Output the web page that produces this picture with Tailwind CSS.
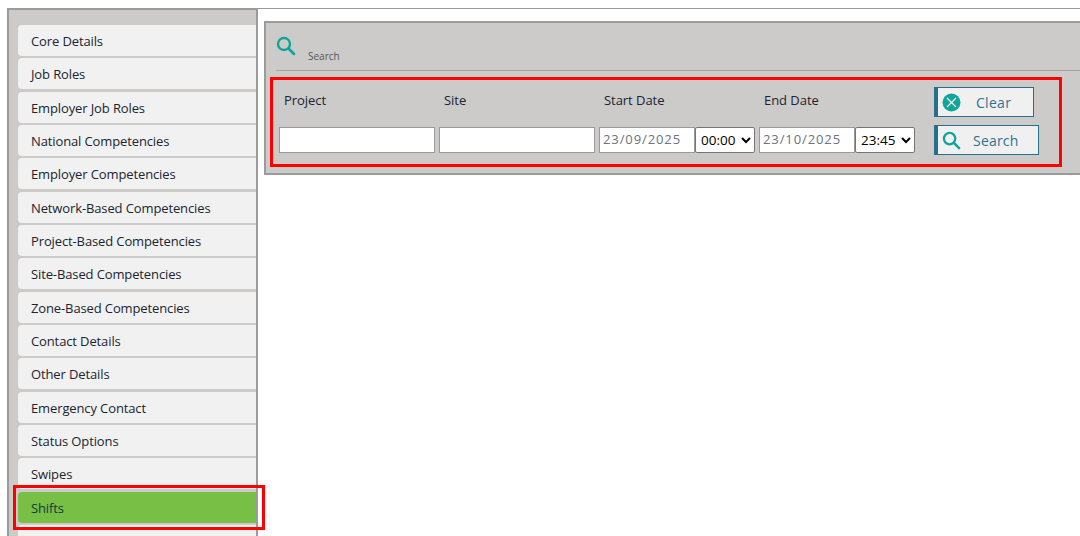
<!DOCTYPE html>
<html><head><meta charset="utf-8"><script src="https://cdn.jsdelivr.net/npm/@tailwindcss/browser@4"></script></head>
<body class="bg-white font-['Open_Sans','Noto_Sans',sans-serif] overflow-hidden">
<div class="relative w-[1080px] h-[536px] overflow-hidden flex pt-2 pl-[7px]">
  <aside class="w-[251px] h-[540px] shrink-0 bg-[#cdcbc9] border-2 border-[#9b9b9b] pt-[15px] pl-[9px] flex flex-col gap-[2.33px] text-[13px] tracking-[-0.12px] text-[#1a2530] font-medium">
    <div class="h-[31px] shrink-0 flex items-center pl-[13px] pt-[2.6px] rounded-l-[4px] bg-[#f1f1f1]">Core Details</div>
    <div class="h-[31px] shrink-0 flex items-center pl-[13px] pt-[2.6px] rounded-l-[4px] bg-[#f1f1f1]">Job Roles</div>
    <div class="h-[31px] shrink-0 flex items-center pl-[13px] pt-[2.6px] rounded-l-[4px] bg-[#f1f1f1]">Employer Job Roles</div>
    <div class="h-[31px] shrink-0 flex items-center pl-[13px] pt-[2.6px] rounded-l-[4px] bg-[#f1f1f1]">National Competencies</div>
    <div class="h-[31px] shrink-0 flex items-center pl-[13px] pt-[2.6px] rounded-l-[4px] bg-[#f1f1f1]">Employer Competencies</div>
    <div class="h-[31px] shrink-0 flex items-center pl-[13px] pt-[2.6px] rounded-l-[4px] bg-[#f1f1f1]">Network-Based Competencies</div>
    <div class="h-[31px] shrink-0 flex items-center pl-[13px] pt-[2.6px] rounded-l-[4px] bg-[#f1f1f1]">Project-Based Competencies</div>
    <div class="h-[31px] shrink-0 flex items-center pl-[13px] pt-[2.6px] rounded-l-[4px] bg-[#f1f1f1]">Site-Based Competencies</div>
    <div class="h-[31px] shrink-0 flex items-center pl-[13px] pt-[2.6px] rounded-l-[4px] bg-[#f1f1f1]">Zone-Based Competencies</div>
    <div class="h-[31px] shrink-0 flex items-center pl-[13px] pt-[2.6px] rounded-l-[4px] bg-[#f1f1f1]">Contact Details</div>
    <div class="h-[31px] shrink-0 flex items-center pl-[13px] pt-[2.6px] rounded-l-[4px] bg-[#f1f1f1]">Other Details</div>
    <div class="h-[31px] shrink-0 flex items-center pl-[13px] pt-[2.6px] rounded-l-[4px] bg-[#f1f1f1]">Emergency Contact</div>
    <div class="h-[31px] shrink-0 flex items-center pl-[13px] pt-[2.6px] rounded-l-[4px] bg-[#f1f1f1]">Status Options</div>
    <div class="h-[31px] shrink-0 flex items-center pl-[13px] pt-[2.6px] rounded-l-[4px] bg-[#f1f1f1]">Swipes</div>
    <div class="h-[31px] shrink-0 flex items-center pl-[13px] pt-[2.6px] rounded-l-[4px] bg-[#78bf46] text-[#123a3a]">Shifts</div>
    <div class="h-[31px] shrink-0 rounded-l-[4px] bg-[#f1f1f1]"></div>
  </aside>
  <main class="flex-1 min-w-0">
    <div class="border-t border-[#9b9b9b] h-[13px]"></div>
    <section class="ml-[6px] mr-[-20px] h-[154px] bg-[#cdcbc9] border-2 border-[#9b9b9b] pl-[4px]">
      <div class="ml-[6px] h-[48px] border-b border-[#a3a3a3] flex items-start">
        <svg class="mt-[13px]" width="20" height="20" viewBox="0 0 20 20" fill="none" stroke="#0ea59a"><circle cx="8" cy="8" r="6" stroke-width="2.4"/><path d="M12.5 12.5L18 18" stroke-width="2.6" stroke-linecap="round"/></svg>
        <span class="ml-[12px] mt-[26px] text-[10px] leading-[14px] text-[#555]">Search</span>
      </div>
      <div class="mt-[6px] ml-0 w-[792px] h-[90px] border-[3px] border-[#ff0000] relative flex">
        <div class="w-[661px] pl-[6px] pt-[11px] shrink-0">
          <div class="flex h-[20px] items-center text-[13px] tracking-[-0.05px] font-medium text-[#1a2530]">
            <span class="w-[160px] pl-[5px]">Project</span>
            <span class="w-[160px] pl-[5px]">Site</span>
            <span class="w-[160px] pl-[5px]">Start Date</span>
            <span class="w-[160px] pl-[5px]">End Date</span>
          </div>
          <div class="flex items-stretch h-[26px] mt-[16px]">
            <input type="text" class="w-[156px] h-[26px] bg-white border border-[#9b9b9b] mr-[4px]">
            <input type="text" class="w-[156px] h-[26px] bg-white border border-[#9b9b9b] mr-[4px]">
            <input type="text" value="23/09/2025" class="w-[96px] h-[26px] bg-white border border-[#9b9b9b] pl-[3px] pb-[2px] text-[13px] tracking-[0.9px] text-[#6b7280]">
            <select class="w-[60px] h-[26px] bg-white border border-[#767676] rounded-[2px] mr-[4px] text-[13.5px] text-black pl-[1px] appearance-auto"><option>00:00</option></select>
            <input type="text" value="23/10/2025" class="w-[96px] h-[26px] bg-white border border-[#9b9b9b] pl-[3px] pb-[2px] text-[13px] tracking-[0.9px] text-[#6b7280]">
            <select class="w-[60px] h-[26px] bg-white border border-[#767676] rounded-[2px] text-[13.5px] text-black pl-[1px] appearance-auto"><option>23:45</option></select>
          </div>
        </div>
        <div class="flex flex-col items-start pt-[7px] gap-[8px] text-[#2f7390] text-[14px]">
          <button class="w-[100px] h-[30px] bg-[#f0f0f0] border border-[#26708f] border-l-[4px] flex items-center pl-[4px]">
            <svg width="19" height="19" viewBox="0 0 19 19"><circle cx="9.5" cy="9.5" r="9" fill="#0ea59a"/><path d="M5 5L14 14M14 5L5 14" stroke="#f0f0f0" stroke-width="1.4"/></svg>
            <span class="ml-[15px] tracking-[0.3px]">Clear</span>
          </button>
          <button class="w-[105px] h-[30px] bg-[#f0f0f0] border border-[#26708f] border-l-[4px] flex items-center pl-[4px]">
            <svg width="19" height="19" viewBox="0 0 20 20" fill="none" stroke="#0ea59a"><circle cx="8" cy="8" r="6" stroke-width="2.4"/><path d="M12.5 12.5L18 18" stroke-width="2.6" stroke-linecap="round"/></svg>
            <span class="ml-[12px] tracking-[0.2px]">Search</span>
          </button>
        </div>
      </div>
    </section>
  </main>
  <div class="absolute left-[13px] top-[485px] w-[252px] h-[45px] border-[3px] border-[#ff0000]"></div>
</div>
</body></html>
